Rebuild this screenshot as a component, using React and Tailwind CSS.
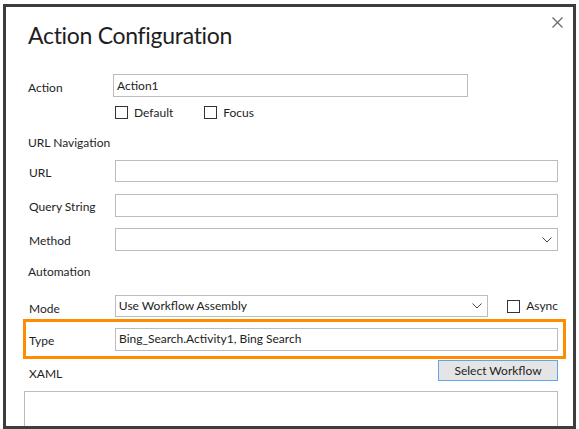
import { useState } from 'react'

const font = { fontFamily: 'Lato, "Noto Sans", sans-serif' }

function Checkbox({ label, checked, onChange }) {
  return (
    <label className="flex items-center gap-[6px] cursor-pointer select-none">
      <span
        onClick={onChange}
        className="w-[13px] h-[13px] border border-[#333] bg-white flex items-center justify-center"
      >
        {checked && <span className="w-[7px] h-[7px] bg-[#333]" />}
      </span>
      <span className="text-[12px] text-[#1e1e1e]">{label}</span>
    </label>
  )
}

function Chevron() {
  return (
    <svg width="10" height="6" viewBox="0 0 10 6" className="shrink-0">
      <path d="M0.5 0.5 L5 5 L9.5 0.5" fill="none" stroke="#444" strokeWidth="1" />
    </svg>
  )
}

function Field({ value = '', className = '' }) {
  return (
    <div className={`border border-[#bcbcbc] bg-white flex items-center pl-[3px] pr-[3px] text-[12px] text-[#222] ${className}`}>
      {value}
    </div>
  )
}

function Select({ value = '', className = '' }) {
  return (
    <div className={`border border-[#bcbcbc] bg-white flex items-center justify-between pl-[3px] pr-[5px] text-[12px] text-[#222] ${className}`}>
      <span>{value}</span>
      <Chevron />
    </div>
  )
}

export default function App() {
  const [flags, setFlags] = useState({ def: false, focus: false, async: false })
  const toggle = (k) => setFlags({ ...flags, [k]: !flags[k] })

  return (
    <div className="w-[579px] h-[429px] bg-white overflow-hidden" style={font}>
      <div className="relative ml-[3px] mt-[4px] w-[573px] h-[425px] border-[3px] border-[#3d3d3d] bg-white overflow-hidden">
        {/* Close */}
        <button className="absolute left-[546px] top-[10px] w-[11px] h-[11px]">
          <svg width="11" height="11" viewBox="0 0 11 11">
            <path d="M0.5 0.5 L10.5 10.5 M10.5 0.5 L0.5 10.5" stroke="#6b6b6b" strokeWidth="1.3" />
          </svg>
        </button>

        <div className="pl-[22px] pr-[15px]">
          {/* Title */}
          <div className="h-[32px] mt-[12px] flex items-center text-[23px] tracking-[-0.3px] text-[#1e1e1e]">Action Configuration</div>

          {/* Action */}
          <div className="mt-[23px] flex items-center h-[23px]">
            <div className="w-[85px] text-[12px] text-[#1e1e1e] pt-[4px]">Action</div>
            <Field value="Action1" className="w-[355px] h-[23px]" />
          </div>

          <div className="mt-[7px] h-[17px] flex items-center gap-[31px] pl-[87px]">
            <Checkbox label="Default" checked={flags.def} onChange={() => toggle('def')} />
            <Checkbox label="Focus" checked={flags.focus} onChange={() => toggle('focus')} />
          </div>

          {/* URL Navigation */}
          <div className="mt-[12px] h-[20px] flex items-center text-[12px] text-[#1e1e1e]">URL Navigation</div>

          <div className="mt-[7px] flex items-center h-[22px]">
            <div className="w-[87px] pl-[1px] pt-[3px] text-[12px] text-[#1e1e1e]">URL</div>
            <Field className="flex-1 h-[22px]" />
          </div>
          <div className="mt-[12px] flex items-center h-[23px]">
            <div className="w-[87px] pl-[1px] pt-[3px] text-[12px] text-[#1e1e1e]">Query String</div>
            <Field className="flex-1 h-[23px]" />
          </div>
          <div className="mt-[11px] flex items-center h-[23px]">
            <div className="w-[87px] pl-[1px] pt-[3px] text-[12px] text-[#1e1e1e]">Method</div>
            <Select className="flex-1 h-[23px]" />
          </div>

          {/* Automation */}
          <div className="mt-[11px] h-[20px] flex items-center text-[12px] text-[#1e1e1e]">Automation</div>

          <div className="mt-[13px] flex items-center h-[22px]">
            <div className="w-[87px] pl-[1px] text-[12px] text-[#1e1e1e] pt-[5px]">Mode</div>
            <Select value="Use Workflow Assembly" className="w-[374px] h-[22px]" />
            <div className="ml-[19px]">
              <Checkbox label="Async" checked={flags.async} onChange={() => toggle('async')} />
            </div>
          </div>
        </div>

        {/* Type (highlighted) */}
        <div className="ml-[17px] mt-[2px] w-[543px] h-[40px] border-[3px] border-[#ff8c00] flex items-center pl-[3px] pr-[5px]">
          <div className="w-[86px] text-[12px] text-[#1e1e1e] pt-[4px]">Type</div>
          <Field value="Bing_Search.Activity1, Bing Search" className="flex-1 h-[23px]" />
        </div>

        <div className="pl-[23px] pr-[15px]">
          <div className="mt-[1px] flex items-start justify-between h-[21px]">
            <div className="text-[12px] text-[#1e1e1e] pt-[5px]">XAML</div>
            <button className="w-[120px] h-[21px] bg-[#e5e5e5] border border-[#5fa4ec] text-[12px] text-[#222] flex items-center justify-center">
              Select Workflow
            </button>
          </div>
        </div>

        <div className="ml-[18px] mr-[15px] mt-[10px] h-[60px] border border-[#bcbcbc] bg-white" />
      </div>
    </div>
  )
}
